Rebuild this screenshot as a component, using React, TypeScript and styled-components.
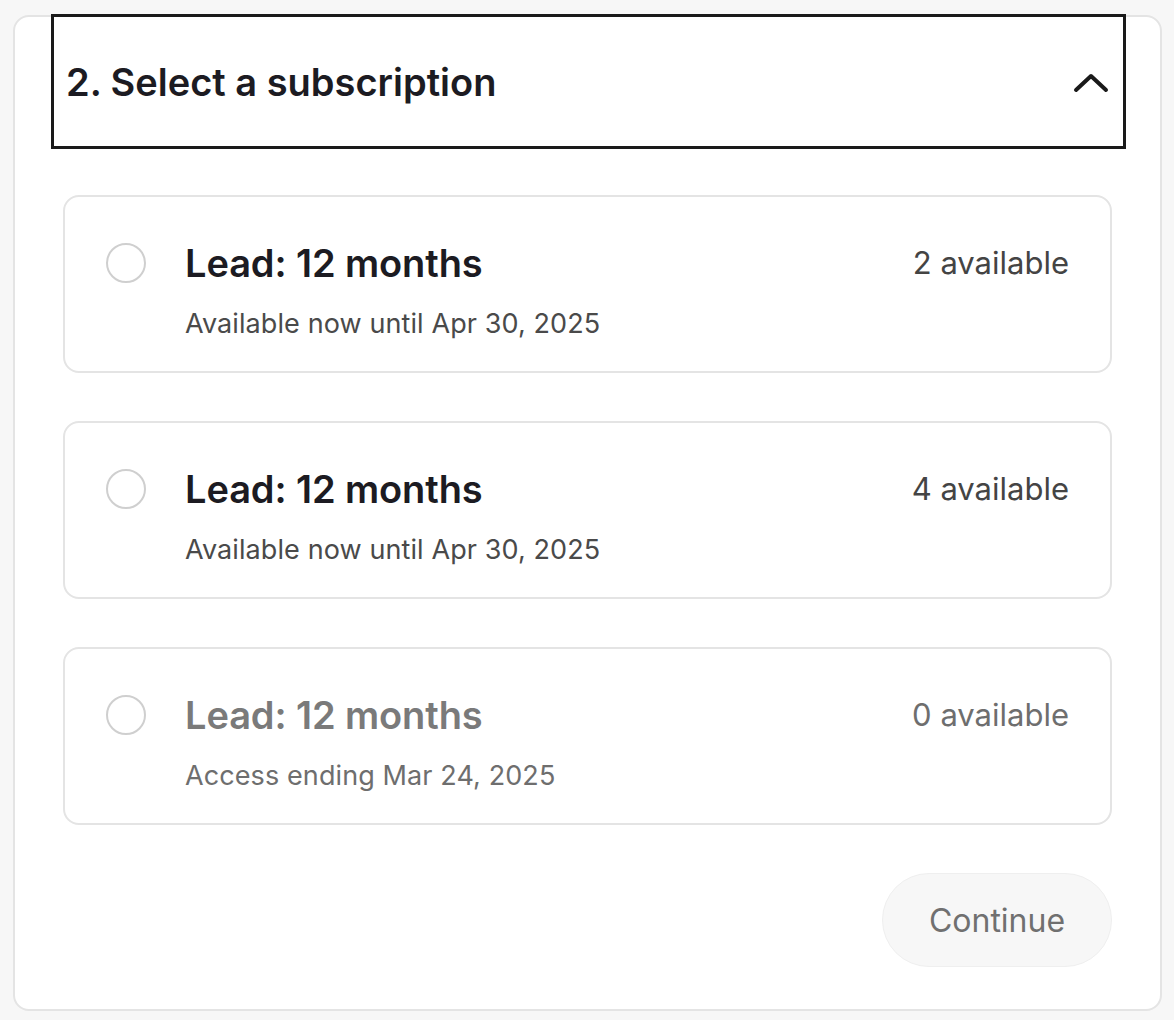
import React from "react";
import styled, { createGlobalStyle } from "styled-components";

const GlobalStyle = createGlobalStyle`
  html, body {
    margin: 0;
    padding: 0;
    background: #f7f7f7;
    font-family: Inter, "Noto Sans", "Liberation Sans", sans-serif;
  }
`;

const Page = styled.div`
  padding: 14px 12px 10px 13px;
`;

const Panel = styled.section`
  background: #fff;
  border: 2px solid #e4e4e4;
  border-radius: 16px;
  padding: 0 48px 40px 36px;
  height: 996px;
  box-sizing: border-box;
  margin-top: 1px;
`;

const Header = styled.button`
  display: flex;
  align-items: center;
  justify-content: space-between;
  width: calc(100% + 14px);
  height: 135px;
  margin-top: -3px;
  padding: 0 14px 0 12px;
  box-sizing: border-box;
  background: #fff;
  border: 3px solid #1a1a1a;
  cursor: pointer;
  font-family: inherit;
`;

const Title = styled.h2`
  margin: 0;
  font-size: 38px;
  font-weight: 600;
  letter-spacing: 0;
  color: #1c1b22;
`;

const List = styled.div`
  display: flex;
  flex-direction: column;
  gap: 48px;
  margin: 46px 0 0 12px;
`;

const Card = styled.label<{ $disabled?: boolean }>`
  display: grid;
  grid-template-columns: 40px 1fr auto;
  column-gap: 39px;
  align-items: start;
  height: 178px;
  box-sizing: border-box;
  padding: 44px 41px 0 41px;
  border: 2px solid #e4e4e4;
  border-radius: 16px;
  cursor: ${(p) => (p.$disabled ? "default" : "pointer")};
`;

const Radio = styled.span`
  width: 40px;
  height: 40px;
  border-radius: 50%;
  border: 2px solid #cfcfcf;
  box-sizing: border-box;
  margin-top: 2px;
`;

const Info = styled.div`
  display: flex;
  flex-direction: column;
  gap: 23px;
`;

const Name = styled.div<{ $disabled?: boolean }>`
  font-size: 38px;
  line-height: 44px;
  font-weight: 600;
  letter-spacing: -0.1px;
  color: ${(p) => (p.$disabled ? "#7a7a7a" : "#1c1b22")};
`;

const Sub = styled.div<{ $disabled?: boolean }>`
  font-size: 27px;
  line-height: 32px;
  letter-spacing: 0.1px;
  color: ${(p) => (p.$disabled ? "#6e6e6e" : "#4a4a4a")};
`;

const Count = styled.div<{ $disabled?: boolean }>`
  font-size: 31px;
  line-height: 44px;
  color: ${(p) => (p.$disabled ? "#6e6e6e" : "#444")};
`;

const Footer = styled.div`
  display: flex;
  justify-content: flex-end;
  margin-top: 48px;
`;

const ContinueButton = styled.button`
  width: 230px;
  height: 94px;
  border-radius: 47px;
  border: 1px solid #efefef;
  background: #f7f7f7;
  color: #707070;
  font-family: inherit;
  font-size: 32px;
  cursor: not-allowed;
`;

const subs = [
  { name: "Lead: 12 months", sub: "Available now until Apr 30, 2025", count: 2 },
  { name: "Lead: 12 months", sub: "Available now until Apr 30, 2025", count: 4 },
  { name: "Lead: 12 months", sub: "Access ending Mar 24, 2025", count: 0 },
];

const ChevronUp = () => (
  <svg width="36" height="22" viewBox="0 0 36 22" fill="none">
    <path
      d="M3 19 L18 5 L33 19"
      stroke="#1a1a1a"
      strokeWidth="4"
      strokeLinecap="round"
      strokeLinejoin="round"
    />
  </svg>
);

const App = () => {
  return (
    <>
      <GlobalStyle />
      <Page>
        <Panel>
          <Header>
            <Title>2. Select a subscription</Title>
            <ChevronUp />
          </Header>
          <List>
            {subs.map((s, i) => {
              const off = s.count === 0;
              return (
                <Card key={i} $disabled={off}>
                  <Radio />
                  <Info>
                    <Name $disabled={off}>{s.name}</Name>
                    <Sub $disabled={off}>{s.sub}</Sub>
                  </Info>
                  <Count $disabled={off}>{s.count} available</Count>
                </Card>
              );
            })}
          </List>
          <Footer>
            <ContinueButton disabled>Continue</ContinueButton>
          </Footer>
        </Panel>
      </Page>
    </>
  );
};

export default App;
